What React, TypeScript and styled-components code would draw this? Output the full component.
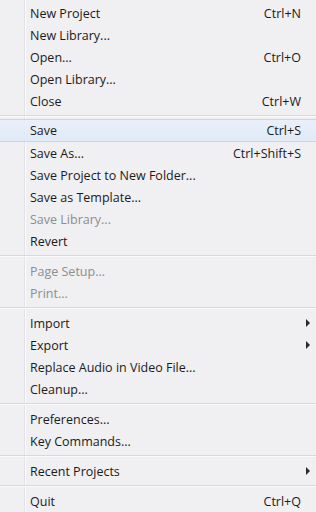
import React from "react";
import styled, { createGlobalStyle } from "styled-components";

const Global = createGlobalStyle`
  html, body { margin: 0; padding: 0; background: #f0eff0; }
  #root { width: 316px; height: 512px; }
`;

const Menu = styled.div`
  position: relative;
  width: 316px;
  height: 512px;
  box-sizing: border-box;
  padding-top: 2px;
  background: #f0eff1;
  font-family: "Open Sans", "Noto Sans", sans-serif;
  font-size: 12.5px;
  color: #1b1b1b;
  overflow: hidden;
  display: flex;
  flex-direction: column;
`;

const Gutter = styled.div`
  position: absolute;
  left: 24px;
  top: 0;
  bottom: 0;
  width: 1px;
  background: #e2e2e4;
  border-right: 1px solid #fbfbfc;
  z-index: 0;
`;

const Row = styled.div<{ $hover?: boolean; $disabled?: boolean }>`
  position: relative;
  z-index: 1;
  height: 22px;
  box-sizing: border-box;
  display: flex;
  align-items: center;
  padding: 0 15px 0 30px;
  color: ${(p) => (p.$disabled ? "#8e8e8e" : "#1b1b1b")};
  ${(p) =>
    p.$hover
      ? `
    margin-top: -1px;
    height: 23px;
    background: linear-gradient(to bottom, rgba(232,240,250,0.85), rgba(222,233,247,0.85));
    border-top: 1px solid #c4d7ee;
    border-bottom: 1px solid #c4d7ee;
  `
      : ""}
`;

const Label = styled.span`
  flex: 1;
  white-space: nowrap;
`;

const Shortcut = styled.span`
  white-space: nowrap;
`;

const Arrow = styled.span`
  position: absolute;
  right: 6px;
  top: 7px;
  width: 0;
  height: 0;
  border-top: 4px solid transparent;
  border-bottom: 4px solid transparent;
  border-left: 4px solid #2a2a2a;
`;

const Separator = styled.div`
  position: relative;
  z-index: 1;
  height: 8px;
  display: flex;
  flex-direction: column;
  justify-content: center;
  &::before {
    content: "";
    display: block;
    height: 1px;
    background: #d9d8da;
    margin-left: 0;
  }
  &::after {
    content: "";
    display: block;
    height: 1px;
    background: #fbfbfc;
  }
`;

type Item =
  | { sep: true }
  | { label: string; shortcut?: string; disabled?: boolean; hover?: boolean; sub?: boolean };

const items: Item[] = [
  { label: "New Project", shortcut: "Ctrl+N" },
  { label: "New Library..." },
  { label: "Open...", shortcut: "Ctrl+O" },
  { label: "Open Library..." },
  { label: "Close", shortcut: "Ctrl+W" },
  { sep: true },
  { label: "Save", shortcut: "Ctrl+S", hover: true },
  { label: "Save As...", shortcut: "Ctrl+Shift+S" },
  { label: "Save Project to New Folder..." },
  { label: "Save as Template..." },
  { label: "Save Library...", disabled: true },
  { label: "Revert" },
  { sep: true },
  { label: "Page Setup...", disabled: true },
  { label: "Print...", disabled: true },
  { sep: true },
  { label: "Import", sub: true },
  { label: "Export", sub: true },
  { label: "Replace Audio in Video File..." },
  { label: "Cleanup..." },
  { sep: true },
  { label: "Preferences..." },
  { label: "Key Commands..." },
  { sep: true },
  { label: "Recent Projects", sub: true },
  { sep: true },
  { label: "Quit", shortcut: "Ctrl+Q" },
];

export default function App() {
  return (
    <>
      <Global />
      <Menu>
        <Gutter />
        {items.map((it, i) =>
          "sep" in it ? (
            <Separator key={i} />
          ) : (
            <Row key={i} $hover={it.hover} $disabled={it.disabled}>
              <Label>{it.label}</Label>
              {it.shortcut && <Shortcut>{it.shortcut}</Shortcut>}
              {it.sub && <Arrow />}
            </Row>
          )
        )}
      </Menu>
    </>
  );
}
